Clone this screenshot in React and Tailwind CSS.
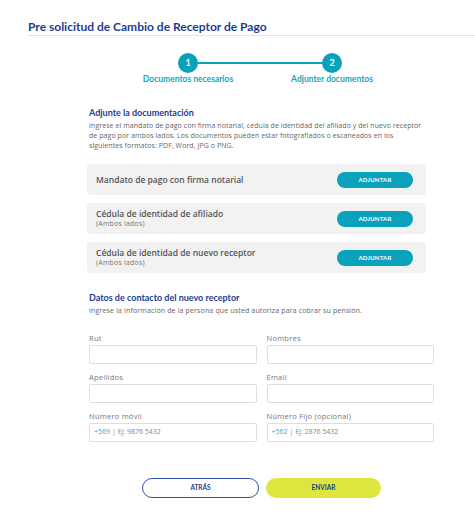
import React from 'react'

const body = { fontFamily: '"Open Sans", Roboto, sans-serif' }

function DocCard({ title, note }) {
  return (
    <div className="flex items-center justify-between h-[31px] rounded-[3px] bg-[#f2f2f2] pl-[9px] pr-[13px]">
      <div className="flex flex-col" style={body}>
        <span className="text-[8.5px] leading-[10px] font-semibold text-[#555]">{title}</span>
        {note && <span className="text-[7px] leading-[9px] tracking-[0.2px] text-[#777]">{note}</span>}
      </div>
      <button className="w-[76px] h-[16px] rounded-full bg-[#0aa2bb] text-white text-[6px] font-bold tracking-[0.2px]">
        ADJUNTAR
      </button>
    </div>
  )
}

function Field({ label, prefix, placeholder }) {
  return (
    <div className="flex flex-col" style={body}>
      <span className="text-[7.5px] leading-[9px] tracking-[0.25px] text-[#777] mb-[2px]">{label}</span>
      <div className="h-[19px] border border-[#dedede] rounded-[2px] bg-white flex items-center px-[4px] text-[7px] text-[#888]">
        {prefix && (
          <>
            <span className="text-[#2bb3c6]">{prefix}</span>
            <span className="ml-[2px]">| {placeholder}</span>
          </>
        )}
      </div>
    </div>
  )
}

export default function App() {
  return (
    <div className="w-[474px] h-[526px] bg-white overflow-hidden" style={{ fontFamily: 'Lato, "Open Sans", sans-serif' }}>
      {/* Encabezado */}
      <div className="ml-[28px] pt-[19px]">
        <h1 className="text-[12px] leading-[15px] font-bold text-[#1d3d8f]">Pre solicitud de Cambio de Receptor de Pago</h1>
        <div className="mt-[1px] h-[1px] bg-[#e3e3e3]" />
      </div>

      {/* Pasos */}
      <div className="mt-[17px]">
        <div className="flex items-center ml-[178px]">
          <div className="w-[20px] h-[20px] rounded-full bg-[#0aa2bb] text-white text-[9px] font-bold flex items-center justify-center">1</div>
          <div className="w-[124px] h-[1.5px] bg-[#0aa2bb]" />
          <div className="w-[20px] h-[20px] rounded-full bg-[#0aa2bb] text-white text-[9px] font-bold flex items-center justify-center">2</div>
        </div>
        <div className="flex mt-[1px] ml-[128px]">
          <span className="w-[120px] text-center text-[8.5px] leading-[10px] font-bold text-[#12a7bd]">Documentos necesarios</span>
          <span className="ml-[24px] w-[120px] text-center text-[8.5px] leading-[10px] font-bold text-[#12a7bd]">Adjunter documentos</span>
        </div>
      </div>

      {/* Documentación */}
      <div className="ml-[87px] w-[339px] mt-[23px]">
        <h2 className="ml-[2px] text-[9px] leading-[11px] font-bold text-[#1d3d8f]">Adjunte la documentación</h2>
        <p className="ml-[2px] mt-[3px] text-[7px] leading-[10px] tracking-[0.07px] text-[#666]" style={body}>
          Ingrese el mandato de pago con firma notarial, cédula de identidad del afiliado y del nuevo receptor de pago por ambos lados. Los documentos pueden estar fotografiados o escaneados en los siguientes formatos: PDF, Word, JPG o PNG.
        </p>
        <div className="mt-[13px] flex flex-col gap-[8px]">
          <DocCard title="Mandato de pago con firma notarial" />
          <DocCard title="Cédula de identidad de afiliado" note="(Ambos lados)" />
          <DocCard title="Cédula de identidad de nuevo receptor" note="(Ambos lados)" />
        </div>
      </div>

      {/* Datos de contacto */}
      <div className="ml-[89px] w-[345px] mt-[19px]">
        <h2 className="text-[9px] leading-[11px] font-bold text-[#1d3d8f]">Datos de contacto del nuevo receptor</h2>
        <p className="mt-[3px] text-[7px] leading-[10px] tracking-[0.15px] text-[#666]" style={body}>
          Ingrese la información de la persona que usted autoriza para cobrar su pensión.
        </p>
        <div className="mt-[18px] grid grid-cols-2 gap-x-[10px] gap-y-[9px]">
          <Field label="Rut" />
          <Field label="Nombres" />
          <Field label="Apellidos" />
          <Field label="Email" />
          <Field label="Número móvil" prefix="+569" placeholder="Ej: 9876 5432" />
          <Field label="Número Fijo (opcional)" prefix="+562" placeholder="Ej: 2876 5432" />
        </div>
      </div>

      {/* Acciones */}
      <div className="mt-[36px] ml-[142px] flex gap-[7px]">
        <button className="w-[117px] h-[20px] rounded-full border-[1.5px] border-[#2a4ea3] text-[6.5px] font-bold text-[#1d3d8f]">ATRÁS</button>
        <button className="w-[115px] h-[20px] rounded-full bg-[#dfe53f] text-[6.5px] font-bold text-[#1d3d8f]">ENVIAR</button>
      </div>
    </div>
  )
}
